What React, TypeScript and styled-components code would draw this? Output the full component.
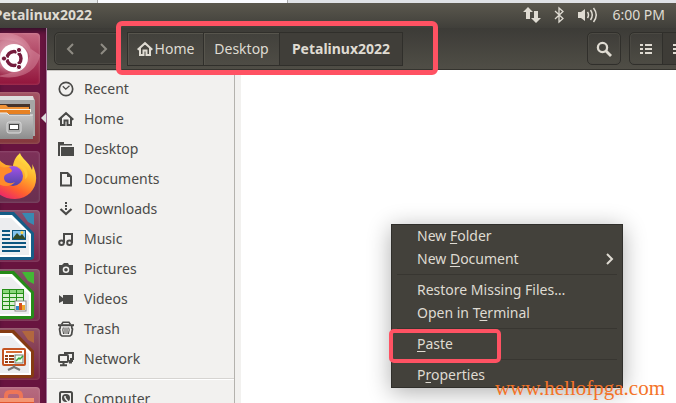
import React from "react";
import styled, { createGlobalStyle, css } from "styled-components";

const GlobalStyle = createGlobalStyle`
  * { box-sizing: border-box; }
  html, body { margin: 0; overflow: hidden; }
  body, button { font-family: "Noto Sans", "Open Sans", sans-serif; font-size: 14px; line-height: 20px; }
  button { margin: 0; padding: 0; border: 0; background: none; color: inherit; text-align: left; cursor: default; }
`;

const Desktop = styled.div`
  height: 100vh;
  display: flex;
  flex-direction: column;
  overflow: hidden;
  position: relative;
  background: #fff;
`;

const HostEdge = styled.div`
  flex: none;
  height: 3px;
  display: flex;
  background: #e0e2e6;
`;
const HostTab = styled.div<{ $w: number; $bg: string }>`
  width: ${(p) => p.$w}px;
  background: ${(p) => p.$bg};
  border-right: 1px solid #aaa;
`;

const TopPanel = styled.header`
  flex: none;
  height: 25px;
  display: flex;
  align-items: center;
  justify-content: space-between;
  padding-bottom: 1px;
  background: linear-gradient(#5b584e, #403f3a);
  color: #dfdbd2;
`;
const WindowTitle = styled.div`
  width: 92px;
  display: flex;
  justify-content: flex-end;
  overflow: hidden;
  white-space: nowrap;
  font-weight: 700;
`;
const Tray = styled.div`
  display: flex;
  align-items: center;
  gap: 13px;
  padding-right: 11px;
  svg { display: block; }
`;

const Main = styled.div`
  flex: 1;
  min-height: 0;
  display: flex;
`;

const Launcher = styled.nav`
  flex: none;
  width: 47px;
  display: flex;
  flex-direction: column;
  align-items: flex-end;
  gap: 7px;
  padding: 5px 6px 0 0;
  overflow: hidden;
  background: #68143f;
  border-right: 1px solid #a5749a;
  box-shadow: inset 0 5px 5px -2px #35102a;
`;
const Tile = styled.button<{ $from: string; $to: string }>`
  flex: none;
  width: 52px;
  height: 52px;
  border-radius: 4px;
  position: relative;
  background: linear-gradient(${(p) => p.$from}, ${(p) => p.$to});
  box-shadow: inset 0 0 2px 1px rgba(255, 255, 255, 0.12);
  svg { display: block; }
`;
const RunningMark = styled.span`
  position: absolute;
  right: -6px;
  top: 21px;
  border: 5px solid transparent;
  border-left-width: 0;
  border-right-color: #ddd;
`;

const FileWindow = styled.section`
  flex: 1;
  min-width: 0;
  display: flex;
  flex-direction: column;
`;
const Toolbar = styled.div`
  flex: none;
  height: 42px;
  display: flex;
  align-items: flex-start;
  padding: 4px 0 0 7px;
  background: linear-gradient(#3c3b37, #504e46);
  border-bottom: 1px solid #35342f;
  color: #dfdbd2;
`;
const ButtonGroup = styled.div`
  flex: none;
  height: 33px;
  display: flex;
  border: 1px solid #302f2b;
  border-radius: 5px;
  box-shadow: inset 0 0 0 1px #4b4943;
  overflow: hidden;
`;
const NavGroup = styled(ButtonGroup)`
  margin-right: 7px;
  background: #3e3d38;
  color: #8f8c84;
`;
const ViewGroup = styled(ButtonGroup)`
  margin: 0 -19px 0 8px;
`;
const SearchGroup = styled(ButtonGroup)`
  margin-left: auto;
`;
const ToolButton = styled.button<{ $active?: boolean }>`
  width: 32px;
  display: flex;
  align-items: center;
  justify-content: center;
  ${(p) => p.$active && css`background: #3e3c37; border-left: 1px solid #302f2b;`}
`;
const PathBar = styled.div`
  flex: none;
  display: flex;
  height: 34px;
  position: relative;
  border: 1px solid #302f2b;
`;
const PathButton = styled.button<{ $w: number; $current?: boolean }>`
  width: ${(p) => p.$w}px;
  display: flex;
  align-items: center;
  justify-content: center;
  gap: 2px;
  white-space: nowrap;
  background: linear-gradient(#42413c, #4e4c45);
  box-shadow: inset 1px 1px 0 #57554d;
  ${(p) =>
    p.$current
      ? css`font-weight: 700; background: #403e39; box-shadow: none;`
      : css`border-right: 1px solid #302f2b;`}
`;
const PathHighlight = styled.div`
  position: absolute;
  inset: -12px -36px -10px -12px;
  border: 5px solid #ff5263;
  border-radius: 6px;
  pointer-events: none;
  z-index: 2;
`;

const Body = styled.div`
  flex: 1;
  min-height: 0;
  display: flex;
`;
const Sidebar = styled.aside`
  flex: none;
  width: 194px;
  padding-right: 6px;
  background: #f2f1ef;
  overflow: hidden;
`;
const PlaceList = styled.div`
  min-height: 100%;
  padding-top: 3px;
  border-right: 1px solid #b4b2ad;
  border-top: 1px solid #c8c6c2;
`;
const Place = styled.button`
  width: 100%;
  height: 30px;
  display: flex;
  align-items: center;
  gap: 10px;
  padding-left: 11px;
  color: #4a4a48;
  svg { display: block; flex: none; }
`;
const PlaceSeparator = styled.hr`
  height: 2px;
  margin: 4px 0;
  border: 0;
  border-top: 1px solid #d6d4d1;
  background: #fff;
`;
const Canvas = styled.main`
  flex: 1;
  min-width: 0;
  position: relative;
  background: #fff;
`;

const ContextMenu = styled.div`
  position: absolute;
  left: 150px;
  top: 154px;
  width: 232px;
  background: #43413b;
  border: 1px solid #302f2b;
  color: #dfdbd2;
  box-shadow: 0 4px 22px rgba(0, 0, 0, 0.32);
`;
const MenuItem = styled.button`
  width: 100%;
  height: 23px;
  display: flex;
  align-items: center;
  justify-content: space-between;
  padding: 0 5px 2px 25px;
  position: relative;
  white-space: nowrap;
  u { text-underline-offset: 2px; }
`;
const MenuSeparator = styled.hr`
  height: 1px;
  margin: 3px 5px 4px;
  border: 0;
  background: #383631;
`;
const ItemHighlight = styled.span`
  position: absolute;
  inset: -4px 121px -7px -3px;
  border: 4px solid #ff5263;
  border-radius: 5px;
  pointer-events: none;
`;
const Watermark = styled.div`
  position: absolute;
  right: 11px;
  bottom: 3px;
  font: 21px/24px "Liberation Serif", serif;
  color: #f47328;
`;

const Chevron = ({ d, w = 2 }: { d: string; w?: number }) => (
  <svg width="16" height="16" fill="none" stroke="currentColor" strokeWidth={w}><path d={d} /></svg>
);

const HomeIcon = () => (
  <svg width="16" height="16" fill="none" stroke="currentColor" strokeWidth="2">
    <path d="M0.7 8.7 8 2.2 15.3 8.7M3 7V14H6.5V9.5H9.5V14H13V7" />
  </svg>
);

const placeIcons: Record<string, React.ReactNode> = {
  Recent: (
    <><circle cx="8" cy="8" r="6.7" fill="none" stroke="currentColor" strokeWidth="1.7" /><path d="M4.8 5.2 7.8 8.2 11.5 4.8" fill="none" stroke="currentColor" strokeWidth="1.3" /></>
  ),
  Desktop: (
    <path d="M0 1H6V3H14V4.5H2V15H0ZM3 6H16V15H3Z" fill="currentColor" />
  ),
  Documents: (
    <><path d="M3 2H9.5L13 5.5V14.5H3Z" fill="none" stroke="currentColor" strokeWidth="2" /><path d="M9 2V6H13Z" fill="currentColor" /></>
  ),
  Downloads: (
    <><path d="M8 1V10" fill="none" stroke="currentColor" strokeWidth="2" strokeDasharray="2 1" /><path d="M2.5 8 8 13 13.5 8" fill="none" stroke="currentColor" strokeWidth="2.3" /></>
  ),
  Music: (
    <g fill="none" stroke="currentColor" strokeWidth="2"><path d="M6 12V3H14V12" /><circle cx="3.5" cy="11.7" r="2.3" /><circle cx="11.5" cy="11.7" r="2.3" /></g>
  ),
  Pictures: (
    <><path d="M5 3 6 2H10L11 4H15V14H1V4H4Z" fill="currentColor" /><circle cx="8" cy="8.8" r="3.3" fill="#f2f1ef" /><circle cx="8" cy="8.8" r="1.8" fill="currentColor" /></>
  ),
  Videos: <path d="M1 4 5 7V4H15V13H5V10L1 12Z" fill="currentColor" />,
  Trash: (
    <g fill="none" stroke="currentColor"><path d="M0 4.2H16" strokeWidth="2" /><path d="M3.5 3.5 5 1.3H11L12.5 3.5" strokeWidth="1.5" /><path d="M2.2 5V7L1.5 8 2.4 13.5 4 15H12L13.6 13.5 14.5 8 13.8 7V5" strokeWidth="1.7" /><path d="M5.3 6.5 4.8 9 5.6 13M7 6.5V13M9 6.5V13M10.7 6.5 11.2 9 10.4 13" strokeWidth="1" /></g>
  ),
  Network: (
    <g fill="none" stroke="currentColor" strokeWidth="2"><rect x="1" y="4" width="9" height="7" rx="1" /><path d="M7 3V2H15V8H12M5.5 11V14M2 14.2H9M11 10H15M11 11.5H14" /></g>
  ),
  Computer: (
    <><rect x="2" y="1" width="12" height="15" rx="1.5" fill="none" stroke="currentColor" strokeWidth="2" /><circle cx="8" cy="7" r="4" fill="currentColor" /><path d="M7 7 12 13" stroke="#f2f1ef" strokeWidth="1.5" /><circle cx="7" cy="6" r="1" fill="#f2f1ef" /></>
  ),
};

const places = ["Recent", "Home", "Desktop", "Documents", "Downloads", "Music", "Pictures", "Videos", "Trash", "Network"];

const PlaceRow = ({ name }: { name: string }) => (
  <Place type="button">
    {name === "Home" ? <HomeIcon /> : <svg width="16" height="16">{placeIcons[name]}</svg>}
    <span>{name}</span>
  </Place>
);

const Art = ({ children }: { children: React.ReactNode }) => (
  <svg width="52" height="52" viewBox="-12 0 52 52">{children}</svg>
);

const UbuntuArt = () => (
  <Art>
    <defs><radialGradient id="swirl"><stop offset="0" stopColor="#eab2bf" /><stop offset="0.6" stopColor="#d593a5" stopOpacity=".7" /><stop offset="1" stopColor="#b65068" stopOpacity=".1" /></radialGradient></defs>
    <circle cx="10" cy="21" r="24" fill="url(#swirl)" />
    <path d="M-8 1C20-5 39 12 30 36C34 15 18 3-8 8ZM40 22C37 39 20 48-4 43C18 41 31 29 31 16Z" fill="#e4a0b1" opacity=".4" />
    <circle cx="14" cy="25" r="14" fill="#fff" />
    <circle cx="14" cy="25.5" r="7" fill="none" stroke="#751c3d" strokeWidth="3.4" />
    <path d="M14 25.5 2 25.5M14 25.5 20 15M14 25.5 20 36" stroke="#fff" strokeWidth="1.5" />
    <circle cx="14" cy="25.5" r="4.8" fill="#fff" />
    <g fill="#751c3d" stroke="#fff" strokeWidth="1"><circle cx="4" cy="25.5" r="2.6" /><circle cx="19" cy="17" r="2.6" /><circle cx="19" cy="34" r="2.6" /></g>
  </Art>
);

const FilesArt = () => (
  <Art>
    <defs><linearGradient id="metal" x2="0" y2="1"><stop stopColor="#c8c8c8" /><stop offset="1" stopColor="#8c8c8c" /></linearGradient></defs>
    <path d="M-10 5H33L35 8V44H-10Z" fill="#a6a6a6" /><path d="M-10 4H33L34 8H-10Z" fill="#dedede" />
    <path d="M-10 12H30V23H-10Z" fill="#46342c" />
    <path d="M-10 13H6L8 15H29V18H-10Z" fill="#f09235" /><path d="M-10 17H31V20H-10Z" fill="#f6eee0" /><path d="M-10 18H30V22H-10Z" fill="#e78122" />
    <path d="M-10 21H7L9 23H32L33 25V47H-10Z" fill="url(#metal)" /><path d="M-10 21H7L9 23H33" fill="none" stroke="#eee" />
    <rect x="7" y="30" width="14" height="11" rx="2" fill="#aaa" stroke="#ddd" />
    <rect x="9.5" y="32.5" width="9" height="5" fill="#fff" stroke="#454545" />
  </Art>
);

const FirefoxArt = () => (
  <Art>
    <defs>
      <linearGradient id="fire" x1=".8" y1="0" x2=".25" y2="1"><stop stopColor="#fff14d" /><stop offset=".4" stopColor="#ffad2b" /><stop offset=".7" stopColor="#ff612e" /><stop offset="1" stopColor="#e91e72" /></linearGradient>
      <linearGradient id="globe" x2="0" y2="1"><stop stopColor="#a252e8" /><stop offset="1" stopColor="#5145a5" /></linearGradient>
    </defs>
    <path d="M20 2C22 8 29 11 32 19C33 16 32 13 32 13C42 30 33 47 15 48C-5 48-16 29-6 13C-5 10-3 9-2 6C0 11 3 12 6 14L13 15C14 8 17 5 20 2Z" fill="url(#fire)" />
    <circle cx="13" cy="25" r="10" fill="url(#globe)" />
    <path d="M-8 15C-2 12 0 18 8 16C10 16 12 19 12 20C10 23 4 22 4 27C4 31 9 34 15 31C9 39-6 34-8 25Z" fill="#ff8b2b" />
    <path d="M13 15C20 13 27 21 25 28C32 25 24 10 16 9Z" fill="#ffc93b" />
  </Art>
);

const Sheet = ({ dark, mid, children }: { dark: string; mid: string; children: React.ReactNode }) => (
  <Art>
    <path d="M-12 2H14L34 23V47Q34 50 30 50H-12Z" fill={dark} />
    <path d="M-12 5H12L31 24V47H-12Z" fill="#fff" />
    <path d="M-12 8H11L29 26V45H-12Z" fill="#ecedef" />
    <path d="M22 3H34V15L28 12Z" fill={mid} />
    {children}
  </Art>
);
const WriterArt = () => (
  <Sheet dark="#155d87" mid="#3989b1">
    <path d="M2 21H10M2 25H10M2 29H10M2 33H26M2 37H26M2 41H20" stroke="#0d5680" strokeWidth="2" />
    <rect x="12.5" y="20.5" width="13" height="9" fill="#86c4ef" stroke="#0d5680" /><path d="M13 28 17 23 20 26 22 24 25 28V29H13Z" fill="#344b28" /><circle cx="22" cy="22.5" r="1.5" fill="#ffd348" />
  </Sheet>
);
const CalcArt = () => (
  <Sheet dark="#258b18" mid="#43b735">
    <rect x="2" y="20" width="22" height="21" fill="#248f18" />
    {[21, 25, 29, 33, 37].map((y) => [3, 10, 17].map((x) => <rect key={`${x}-${y}`} x={x} y={y} width="6" height="3" fill={y === 21 ? "#8bd67b" : "#d8f0cf"} />))}
    <rect x="15" y="32" width="11" height="10" fill="#fff" stroke="#888" /><path d="M17.5 41V37" stroke="#3289c8" strokeWidth="3" /><path d="M20.5 41V34" stroke="#d75220" strokeWidth="3" /><path d="M23.5 41V36" stroke="#eca82c" strokeWidth="3" />
  </Sheet>
);
const ImpressArt = () => (
  <Sheet dark="#853b12" mid="#b2673f">
    <rect x="3" y="21" width="22" height="16" rx="1" fill="#fff" stroke="#c45422" strokeWidth="2" />
    <path d="M6 24H22" stroke="#d56b34" strokeWidth="2" /><path d="M5 28H14M5 31H14M5 34H14" stroke="#963f17" strokeWidth="2" strokeDasharray="3 1 5" />
    <rect x="15" y="27" width="8" height="8" fill="#e9ffe8" stroke="#777" /><path d="M16 33 19 30 20 31 23 28" fill="none" stroke="#35a63c" strokeWidth="1.5" />
    <path d="M14 37V40M14 39 8 42M14 39 20 42" stroke="#777" strokeWidth="2" />
  </Sheet>
);
const SoftwareArt = () => (
  <Art><path d="M6 14V9Q6 5 10 5H17Q21 5 21 9V14" fill="none" stroke="#ee7657" strokeWidth="4" /><path d="M-12 11H34V52H-12Z" fill="#df562f" /><path d="M-12 11H34V15H-12Z" fill="#f49672" /></Art>
);

export default function App() {
  return (
    <>
      <GlobalStyle />
      <Desktop>
        <HostEdge><HostTab $w={98} $bg="#e5e9ea" /><HostTab $w={190} $bg="#fafbff" /></HostEdge>
        <TopPanel>
          <WindowTitle>Petalinux2022</WindowTitle>
          <Tray>
            <svg width="18" height="18" fill="currentColor"><path d="M5 1 10 6H7V13H3V6H0ZM11 5H15V12H18L13 17 8 12H11Z" /></svg>
            <svg width="10" height="18" fill="none" stroke="currentColor" strokeWidth="1.3"><path d="M1 5 9 12.5 5 16V2L9 5.5 1 13" /></svg>
            <svg width="22" height="18" fill="none" stroke="currentColor" strokeWidth="1.5"><path d="M1 6H4L8 3V15L4 12H1Z" fill="currentColor" stroke="none" /><path d="M10.5 6Q12.5 9 10.5 12M13.5 4Q17 9 13.5 14M16.5 2Q22 9 16.5 16" /></svg>
            <time>6:00 PM</time>
          </Tray>
        </TopPanel>
        <Main>
          <Launcher aria-label="Launcher">
            <Tile type="button" aria-label="Dash" $from="#c66b83" $to="#91143b"><UbuntuArt /></Tile>
            <Tile type="button" aria-label="Files" $from="#a35364" $to="#84383c"><FilesArt /><RunningMark /></Tile>
            <Tile type="button" aria-label="Firefox" $from="#7e3159" $to="#69304f"><FirefoxArt /></Tile>
            <Tile type="button" aria-label="Writer" $from="#87506d" $to="#76244c"><WriterArt /></Tile>
            <Tile type="button" aria-label="Calc" $from="#825366" $to="#752a4b"><CalcArt /></Tile>
            <Tile type="button" aria-label="Impress" $from="#905265" $to="#78223e"><ImpressArt /></Tile>
            <Tile type="button" aria-label="Software" $from="#b66b80" $to="#a5485c"><SoftwareArt /></Tile>
          </Launcher>
          <FileWindow>
            <Toolbar>
              <NavGroup>
                <ToolButton type="button" aria-label="Back"><Chevron d="M10 3 5 8 10 13" /></ToolButton>
                <ToolButton type="button" aria-label="Forward"><Chevron d="M6 3 11 8 6 13" /></ToolButton>
              </NavGroup>
              <PathBar>
                <PathButton type="button" $w={76}><HomeIcon />Home</PathButton>
                <PathButton type="button" $w={76}>Desktop</PathButton>
                <PathButton type="button" $w={122} $current>Petalinux2022</PathButton>
                <PathHighlight />
              </PathBar>
              <SearchGroup>
                <ToolButton type="button" aria-label="Search"><svg width="16" height="16" fill="none" stroke="currentColor" strokeWidth="2.3"><circle cx="6.5" cy="6.5" r="4.6" /><path d="M9.5 9.5 15 15" strokeWidth="2.8" /></svg></ToolButton>
              </SearchGroup>
              <ViewGroup>
                <ToolButton type="button" aria-label="List view"><svg width="12" height="12" fill="currentColor"><path d="M0 1H3V3H0ZM5 1H12V3H5ZM0 5H3V7H0ZM5 5H12V7H5ZM0 9H3V11H0ZM5 9H12V11H5Z" /></svg></ToolButton>
                <ToolButton type="button" aria-label="Menu" $active><svg width="12" height="12" fill="currentColor"><path d="M0 1H12V3H0ZM0 5H12V7H0ZM0 9H12V11H0Z" /></svg></ToolButton>
              </ViewGroup>
            </Toolbar>
            <Body>
              <Sidebar>
                <PlaceList>
                  {places.map((name) => <PlaceRow key={name} name={name} />)}
                  <PlaceSeparator />
                  <PlaceRow name="Computer" />
                </PlaceList>
              </Sidebar>
              <Canvas>
                <ContextMenu>
                  <MenuItem type="button"><span>New <u>F</u>older</span></MenuItem>
                  <MenuItem type="button"><span>New <u>D</u>ocument</span><Chevron d="M6 3 11 8 6 13" /></MenuItem>
                  <MenuSeparator />
                  <MenuItem type="button"><span>Restore Missing Files…</span></MenuItem>
                  <MenuItem type="button"><span>Open in T<u>e</u>rminal</span></MenuItem>
                  <MenuSeparator />
                  <MenuItem type="button"><span><u>P</u>aste</span><ItemHighlight /></MenuItem>
                  <MenuSeparator />
                  <MenuItem type="button"><span>P<u>r</u>operties</span></MenuItem>
                </ContextMenu>
              </Canvas>
            </Body>
          </FileWindow>
        </Main>
        <Watermark>www.hellofpga.com</Watermark>
      </Desktop>
    </>
  );
}
